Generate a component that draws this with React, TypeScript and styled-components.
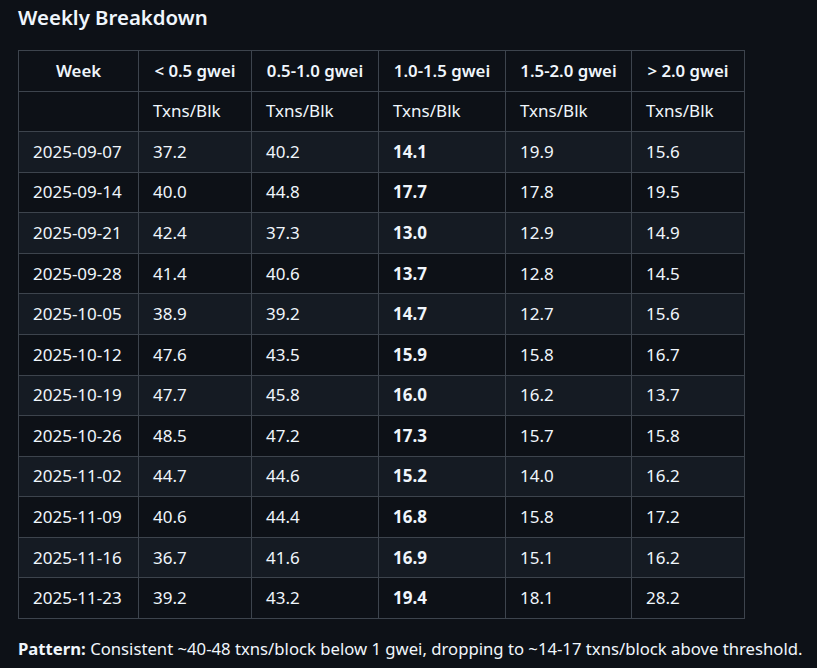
import React from "react";
import styled, { createGlobalStyle } from "styled-components";

const Global = createGlobalStyle`
  html, body { margin: 0; padding: 0; background: #0d1117; }
  body { font-family: "Segoe UI", "Noto Sans", "Open Sans", sans-serif; color: #f0f6fc; }
`;

const Page = styled.div`
  padding: 5px 18px 0 18px;
  width: 817px;
  height: 668px;
  box-sizing: border-box;
  overflow: hidden;
`;

const Title = styled.h3`
  margin: 0 0 20px 0;
  font-size: 20.4px;
  font-weight: 600;
  line-height: 25px;
`;

const Table = styled.table`
  border-collapse: collapse;
  table-layout: fixed;
  width: 726px;
  font-size: 17px;
`;

const Row = styled.tr<{ $alt?: boolean }>`
  background: ${(p) => (p.$alt ? "#151b23" : "#0d1117")};
`;

const Th = styled.th`
  border: 1px solid #3d444d;
  padding: 0 10px;
  height: 40.57px;
  line-height: 24px;
  font-size: 16.8px;
  font-weight: 600;
  text-align: center;
  white-space: nowrap;
  box-sizing: border-box;
`;

const Td = styled.td<{ $bold?: boolean }>`
  border: 1px solid #3d444d;
  padding: 0 14px;
  height: 40.57px;
  line-height: 24px;
  text-align: left;
  white-space: nowrap;
  font-weight: ${(p) => (p.$bold ? 700 : 400)};
  box-sizing: border-box;
`;

const Note = styled.p`
  margin: 18px 0 0 0;
  font-size: 16.7px;
  line-height: 24px;
  white-space: nowrap;
`;

const cols = [120, 113, 127, 127, 126, 113];
const headers = ["Week", "< 0.5 gwei", "0.5-1.0 gwei", "1.0-1.5 gwei", "1.5-2.0 gwei", "> 2.0 gwei"];

const data: string[][] = [
  ["2025-09-07", "37.2", "40.2", "14.1", "19.9", "15.6"],
  ["2025-09-14", "40.0", "44.8", "17.7", "17.8", "19.5"],
  ["2025-09-21", "42.4", "37.3", "13.0", "12.9", "14.9"],
  ["2025-09-28", "41.4", "40.6", "13.7", "12.8", "14.5"],
  ["2025-10-05", "38.9", "39.2", "14.7", "12.7", "15.6"],
  ["2025-10-12", "47.6", "43.5", "15.9", "15.8", "16.7"],
  ["2025-10-19", "47.7", "45.8", "16.0", "16.2", "13.7"],
  ["2025-10-26", "48.5", "47.2", "17.3", "15.7", "15.8"],
  ["2025-11-02", "44.7", "44.6", "15.2", "14.0", "16.2"],
  ["2025-11-09", "40.6", "44.4", "16.8", "15.8", "17.2"],
  ["2025-11-16", "36.7", "41.6", "16.9", "15.1", "16.2"],
  ["2025-11-23", "39.2", "43.2", "19.4", "18.1", "28.2"],
];

export default function App() {
  return (
    <Page>
      <Global />
      <Title>Weekly Breakdown</Title>
      <Table>
        <colgroup>
          {cols.map((w, i) => (
            <col key={i} style={{ width: w }} />
          ))}
        </colgroup>
        <thead>
          <Row>
            {headers.map((h) => (
              <Th key={h}>{h}</Th>
            ))}
          </Row>
        </thead>
        <tbody>
          <Row>
            <Td></Td>
            {[1, 2, 3, 4, 5].map((i) => (
              <Td key={i}>Txns/Blk</Td>
            ))}
          </Row>
          {data.map((r, ri) => (
            <Row key={r[0]} $alt={ri % 2 === 0}>
              {r.map((c, ci) => (
                <Td key={ci} $bold={ci === 3}>
                  {c}
                </Td>
              ))}
            </Row>
          ))}
        </tbody>
      </Table>
      <Note>
        <strong>Pattern:</strong> Consistent ~40-48 txns/block below 1 gwei, dropping to ~14-17 txns/block above threshold.
      </Note>
    </Page>
  );
}
